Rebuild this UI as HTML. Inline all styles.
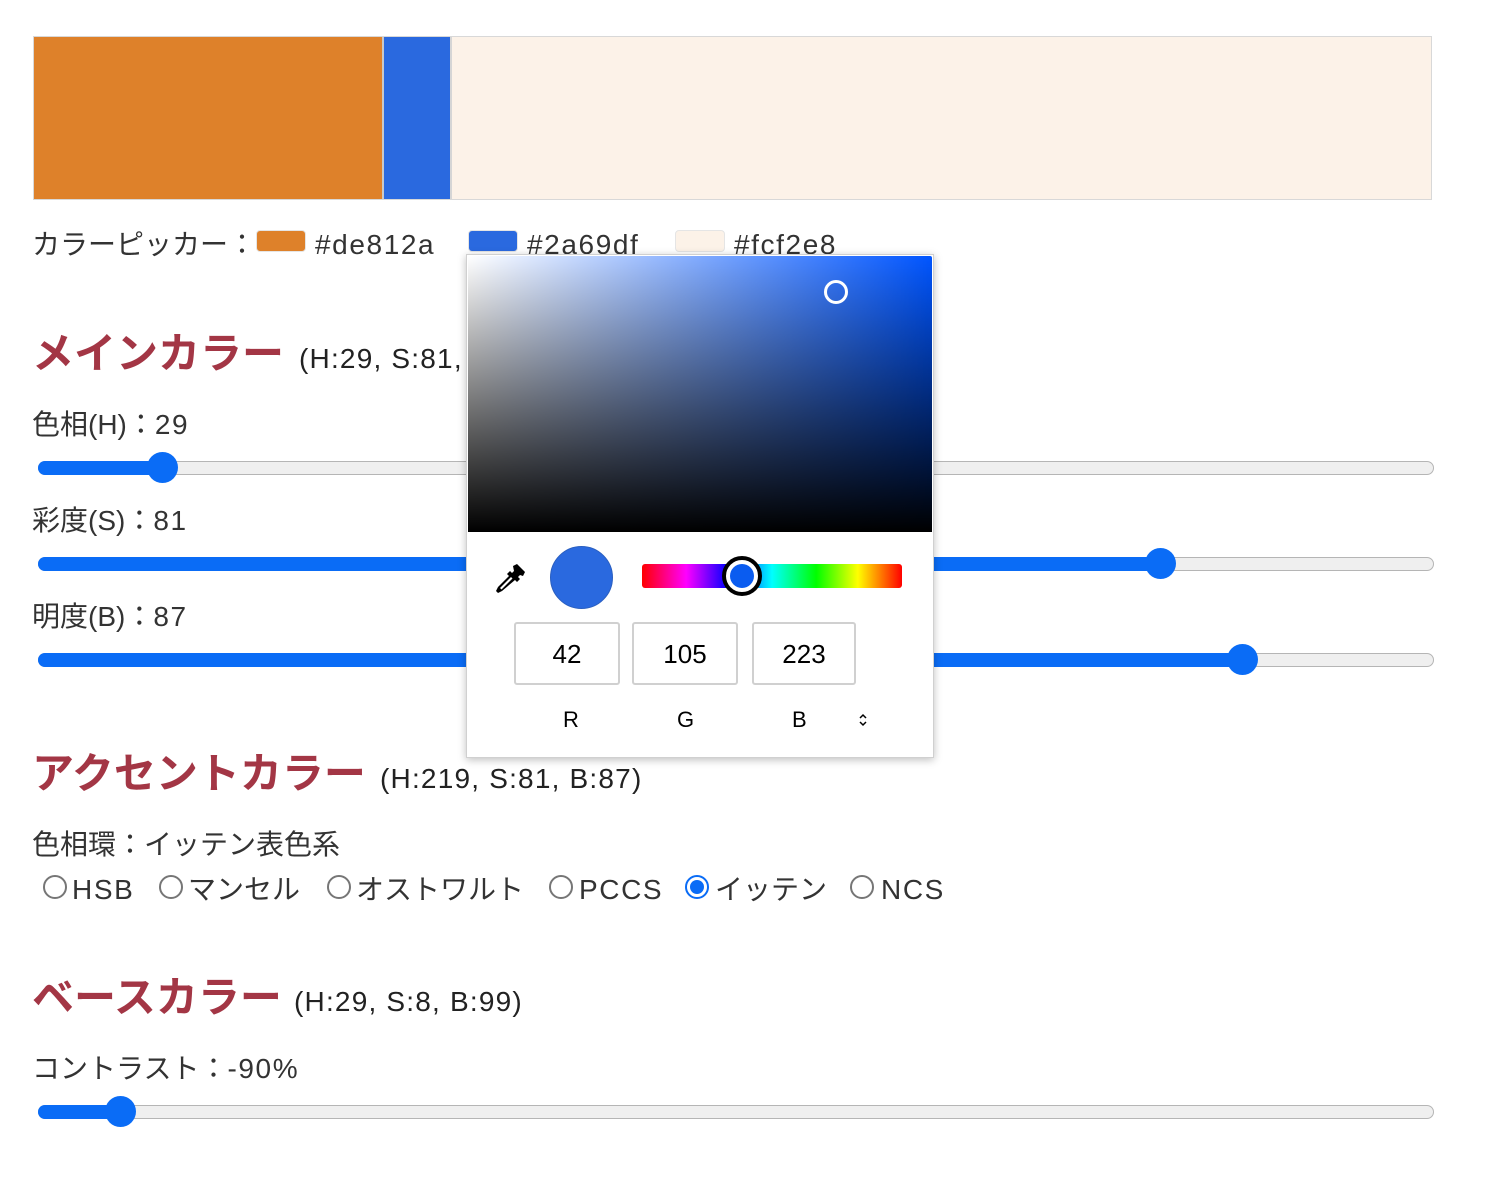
<!DOCTYPE html>
<html><head><meta charset="utf-8"><style>
body{margin:0;width:1492px;height:1184px;background:#fff;position:relative;overflow:hidden;font-family:"Liberation Sans","Noto Sans CJK JP",sans-serif;color:#333}
.a{position:absolute;white-space:nowrap;line-height:1}
.t{font-size:28px;color:#333}
.h{font-size:42px;font-weight:bold;color:#a33645}
.s{font-size:28px;color:#222;letter-spacing:1.2px}
.l{letter-spacing:1.6px}
.track{position:absolute;left:38px;width:1396px;height:14px;border:1px solid #b5b5b5;background:#efefef;border-radius:8px;box-sizing:border-box}
.fill{position:absolute;left:38px;height:14px;background:#0a6cf6;border-radius:8px}
.thumb{position:absolute;width:31px;height:31px;border-radius:50%;background:#0a6cf6}
.sw{position:absolute;top:230px;width:50px;height:22px;border-radius:4px;border:1px solid #e5e5e5;box-sizing:border-box}
.rad{position:absolute;top:875px;width:24px;height:24px;border:2px solid #767676;border-radius:50%;box-sizing:border-box;background:#fff}
.box{position:absolute;top:622px;height:63px;border:2px solid #d0d0d0;border-radius:3px;box-sizing:border-box;font-size:26px;color:#000;text-align:center;line-height:61px}
.lb{position:absolute;top:709px;font-size:22px;color:#000;line-height:1}
</style></head><body>
<div class="a" style="left:33px;top:36px;width:1399px;height:164px;border:1px solid #d8d8d8;box-sizing:border-box;background:#fcf2e8"></div>
<div class="a" style="left:34px;top:37px;width:348px;height:162px;background:#de812a"></div>
<div class="a" style="left:382px;top:37px;width:2px;height:162px;background:#c9c9c9"></div>
<div class="a" style="left:384px;top:37px;width:66px;height:162px;background:#2a69df"></div>
<div class="a" style="left:450px;top:37px;width:2px;height:162px;background:#d5d5d5"></div>

<div class="a t" style="left:32px;top:231px">カラーピッカー：</div>
<div class="sw" style="left:256px;background:#de812a"></div>
<div class="a t l" style="left:315px;top:231px">#de812a</div>
<div class="sw" style="left:468px;background:#2a69df"></div>
<div class="a t l" style="left:527px;top:231px">#2a69df</div>
<div class="sw" style="left:675px;background:#fcf2e8"></div>
<div class="a t l" style="left:734px;top:231px">#fcf2e8</div>

<div class="a h" style="left:32px;top:333px">メインカラー</div>
<div class="a s" style="left:299px;top:345px">(H:29, S:81, B:87)</div>

<div class="a t" style="left:32px;top:411px">色相(H)：<span class="l">29</span></div>
<div class="track" style="top:461px"></div><div class="fill" style="top:461px;width:124px"></div><div class="thumb" style="left:147px;top:452px"></div>
<div class="a t" style="left:32px;top:507px">彩度(S)：<span class="l">81</span></div>
<div class="track" style="top:557px"></div><div class="fill" style="top:557px;width:1122px"></div><div class="thumb" style="left:1145px;top:548px"></div>
<div class="a t" style="left:32px;top:603px">明度(B)：<span class="l">87</span></div>
<div class="track" style="top:653px"></div><div class="fill" style="top:653px;width:1204px"></div><div class="thumb" style="left:1227px;top:644px"></div>

<div class="a h" style="left:32px;top:753px">アクセントカラー</div>
<div class="a s" style="left:380px;top:765px">(H:219, S:81, B:87)</div>
<div class="a t" style="left:32px;top:831px">色相環：イッテン表色系</div>
<div class="rad" style="left:43px"></div><div class="a t l" style="left:72px;top:876px">HSB</div>
<div class="rad" style="left:159px"></div><div class="a t" style="left:188px;top:876px">マンセル</div>
<div class="rad" style="left:327px"></div><div class="a t" style="left:356px;top:876px">オストワルト</div>
<div class="rad" style="left:549px"></div><div class="a t l" style="left:579px;top:876px">PCCS</div>
<div class="rad" style="left:685px;border-color:#0a6cf6"><div style="position:absolute;left:3px;top:3px;width:14px;height:14px;border-radius:50%;background:#0a6cf6"></div></div><div class="a t" style="left:715px;top:876px">イッテン</div>
<div class="rad" style="left:850px"></div><div class="a t l" style="left:881px;top:876px">NCS</div>

<div class="a h" style="left:32px;top:977px">ベースカラー</div>
<div class="a s" style="left:294px;top:988px">(H:29, S:8, B:99)</div>
<div class="a t" style="left:32px;top:1055px">コントラスト：<span class="l">-90%</span></div>
<div class="track" style="top:1105px"></div><div class="fill" style="top:1105px;width:82px"></div><div class="thumb" style="left:105px;top:1096px"></div>

<!-- popup -->
<div class="a" style="left:466px;top:254px;width:468px;height:504px;background:#fff;border:1px solid #d0d0d0;box-sizing:border-box;box-shadow:0 2px 8px rgba(0,0,0,.25)"></div>
<div class="a" style="left:468px;top:256px;width:464px;height:276px;border-radius:2px 2px 0 0;background:linear-gradient(to bottom,rgba(0,0,0,0),#000),linear-gradient(to right,#fff,#0055ff)"></div>
<div class="a" style="left:824px;top:280px;width:24px;height:24px;border:3px solid #fff;border-radius:50%;box-sizing:border-box"></div>
<svg class="a" style="left:493px;top:562px" width="34" height="34" viewBox="0 0 34 34">
<path d="M20 4l4-2 8 8-2 4-3-1-2 2 2 2-3 3-2-2L9 29l-4 2-2-2 2-4 11-11-2-2 3-3 2 2 2-2z" fill="#000"/>
<path d="M7 26L18 15l1.5 1.5L8.5 27.5z" fill="#fff"/>
</svg>
<div class="a" style="left:550px;top:546px;width:63px;height:63px;border-radius:50%;background:#2a69df;border:1px solid #2a5fc0;box-sizing:border-box"></div>
<div class="a" style="left:642px;top:564px;width:260px;height:24px;border-radius:3px;background:linear-gradient(to right,#ff0000,#ff00ff 17%,#0000ff 33%,#00ffff 50%,#00ff00 67%,#ffff00 83%,#ff0000)"></div>
<div class="a" style="left:722px;top:556px;width:40px;height:40px;border-radius:50%;border:4px solid #000;box-sizing:border-box;background:#fff"><div style="position:absolute;left:4px;top:4px;width:24px;height:24px;border-radius:50%;background:#0a5cf0"></div></div>
<div class="box" style="left:514px;width:106px">42</div>
<div class="box" style="left:632px;width:106px">105</div>
<div class="box" style="left:752px;width:104px">223</div>
<div class="lb" style="left:563px">R</div>
<div class="lb" style="left:677px">G</div>
<div class="lb" style="left:792px">B</div>
<svg class="a" style="left:857px;top:712px" width="12" height="16" viewBox="0 0 12 16"><path d="M3 6l3-3 3 3M3 10l3 3 3-3" fill="none" stroke="#000" stroke-width="1.5"/></svg>
</body></html>
